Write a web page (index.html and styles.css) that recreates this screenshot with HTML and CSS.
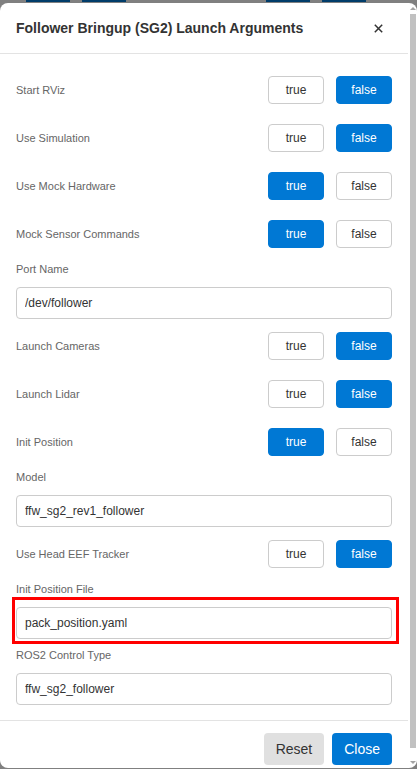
FILE: index.html
```html
<!DOCTYPE html>
<html lang="en">
<head>
<meta charset="utf-8">
<title>Follower Bringup (SG2) Launch Arguments</title>
<link rel="stylesheet" href="styles.css">
</head>
<body>
<div class="page-strip">
  <div class="strip-group"><span class="strip-btn"></span><span class="strip-btn"></span></div>
  <div class="strip-group second"><span class="strip-btn"></span><span class="strip-btn"></span></div>
</div>
<div class="modal">
  <div class="modal-pane">
    <div class="modal-header">
      <h2 class="modal-title">Follower Bringup (SG2) Launch Arguments</h2>
      <button class="close-btn" aria-label="Close">
        <svg width="9" height="9" viewBox="0 0 9 9"><path d="M0.8 0.8 L8.2 8.2 M8.2 0.8 L0.8 8.2" stroke="#333" stroke-width="1.5" fill="none"/></svg>
      </button>
    </div>
    <div class="modal-body">
      <div class="toggle-row"><span class="arg-label">Start RViz</span><div class="choices"><button class="choice">true</button><button class="choice active">false</button></div></div>
      <div class="toggle-row"><span class="arg-label">Use Simulation</span><div class="choices"><button class="choice">true</button><button class="choice active">false</button></div></div>
      <div class="toggle-row"><span class="arg-label">Use Mock Hardware</span><div class="choices"><button class="choice active">true</button><button class="choice">false</button></div></div>
      <div class="toggle-row"><span class="arg-label">Mock Sensor Commands</span><div class="choices"><button class="choice active">true</button><button class="choice">false</button></div></div>
      <div class="text-field"><label class="field-label">Port Name</label><div class="input-wrap"><input class="text-input" type="text" value="/dev/follower"></div></div>
      <div class="toggle-row"><span class="arg-label">Launch Cameras</span><div class="choices"><button class="choice">true</button><button class="choice active">false</button></div></div>
      <div class="toggle-row"><span class="arg-label">Launch Lidar</span><div class="choices"><button class="choice">true</button><button class="choice active">false</button></div></div>
      <div class="toggle-row"><span class="arg-label">Init Position</span><div class="choices"><button class="choice active">true</button><button class="choice">false</button></div></div>
      <div class="text-field"><label class="field-label">Model</label><div class="input-wrap"><input class="text-input" type="text" value="ffw_sg2_rev1_follower"></div></div>
      <div class="toggle-row"><span class="arg-label">Use Head EEF Tracker</span><div class="choices"><button class="choice">true</button><button class="choice active">false</button></div></div>
      <div class="text-field"><label class="field-label">Init Position File</label><div class="input-wrap"><input class="text-input" type="text" value="pack_position.yaml"><span class="highlight-mark"></span></div></div>
      <div class="text-field"><label class="field-label">ROS2 Control Type</label><div class="input-wrap"><input class="text-input" type="text" value="ffw_sg2_follower"></div></div>
    </div>
    <div class="modal-footer">
      <button class="footer-btn reset">Reset</button>
      <button class="footer-btn primary">Close</button>
    </div>
  </div>
  <div class="scrollbar" aria-hidden="true">
    <div class="sb-arrow up"></div>
    <div class="sb-track"><div class="sb-thumb"></div></div>
    <div class="sb-arrow down"></div>
  </div>
</div>
</body>
</html>
```
FILE: styles.css
```css
html, body {
  margin: 0;
  padding: 0;
}
body {
  width: 417px;
  height: 769px;
  overflow: hidden;
  background: #808080;
  font-family: "Liberation Sans", Arial, sans-serif;
}
.page-strip {
  display: flex;
  height: 3px;
}
.strip-group {
  display: flex;
  gap: 12px;
  margin-left: 26px;
}
.strip-group.second {
  margin-left: 140px;
}
.strip-btn {
  display: block;
  width: 44px;
  height: 2px;
  background: #003c6a;
}
.modal {
  display: flex;
  width: 417px;
  height: 765px;
  background: #fff;
  border-radius: 8px;
  overflow: hidden;
}
.modal-pane {
  width: 408px;
  flex-shrink: 0;
}
.scrollbar {
  width: 9px;
  flex-shrink: 0;
  display: flex;
  flex-direction: column;
}
.sb-arrow {
  height: 11px;
  display: flex;
  align-items: center;
  justify-content: center;
  padding-left: 1px;
}
.sb-arrow.up::before {
  content: "";
  border-left: 3px solid transparent;
  border-right: 3px solid transparent;
  border-bottom: 3px solid #a3a3a3;
}
.sb-arrow.down::before {
  content: "";
  border-left: 3px solid transparent;
  border-right: 3px solid transparent;
  border-top: 3px solid #a3a3a3;
}
.sb-track {
  flex: 1;
  padding: 0 1px 0 2px;
}
.sb-thumb {
  height: 734px;
  background: #c1c1c1;
}
.modal-header {
  display: flex;
  align-items: center;
  justify-content: space-between;
  padding: 16px;
  border-bottom: 1px solid #e3e3e3;
}
.modal-title {
  margin: 0;
  font-size: 14px;
  line-height: 18px;
  font-weight: bold;
  color: #333;
}
.close-btn {
  width: 28px;
  height: 28px;
  margin: -5px 0;
  padding: 0;
  border: none;
  background: transparent;
  display: flex;
  align-items: center;
  justify-content: center;
}
.modal-body {
  padding: 22px 16px 15px;
  display: flex;
  flex-direction: column;
}
.toggle-row {
  display: flex;
  align-items: center;
  height: 28px;
}
.toggle-row + .toggle-row {
  margin-top: 20px;
}
.toggle-row + .text-field {
  margin-top: 14px;
}
.text-field + .toggle-row {
  margin-top: 13px;
}
.text-field + .text-field {
  margin-top: 9px;
}
.arg-label {
  flex: 1;
  font-size: 11px;
  color: #666;
}
.choices {
  display: flex;
  gap: 12px;
}
.choice {
  width: 56px;
  height: 28px;
  padding: 0;
  box-sizing: border-box;
  border: 1px solid #cccccc;
  border-radius: 4px;
  background: #fff;
  color: #333;
  font-family: "Liberation Sans", Arial, sans-serif;
  font-size: 12px;
}
.choice.active {
  background: #0078d4;
  border-color: #0078d4;
  color: #fff;
}
.field-label {
  display: block;
  font-size: 11px;
  line-height: 14px;
  color: #666;
  margin-bottom: 11px;
}
.input-wrap {
  position: relative;
}
.text-input {
  display: block;
  width: 100%;
  height: 32px;
  box-sizing: border-box;
  border: 1px solid #cccccc;
  border-radius: 4px;
  padding: 0 8px;
  font-family: "Liberation Sans", Arial, sans-serif;
  font-size: 12px;
  color: #333;
  background: #fff;
}
.highlight-mark {
  position: absolute;
  top: -10px;
  left: -4px;
  right: -7px;
  bottom: -5px;
  border: 3px solid #ff0000;
  pointer-events: none;
}
.modal-footer {
  display: flex;
  justify-content: flex-end;
  gap: 8px;
  padding: 12px 16px;
  border-top: 1px solid #e3e3e3;
}
.footer-btn {
  height: 32px;
  padding: 0 12px;
  border: none;
  border-radius: 4px;
  font-family: "Liberation Sans", Arial, sans-serif;
  font-size: 14px;
}
.footer-btn.reset {
  background: #e0e0e0;
  color: #333;
}
.footer-btn.primary {
  background: #0078d4;
  color: #fff;
}
```
